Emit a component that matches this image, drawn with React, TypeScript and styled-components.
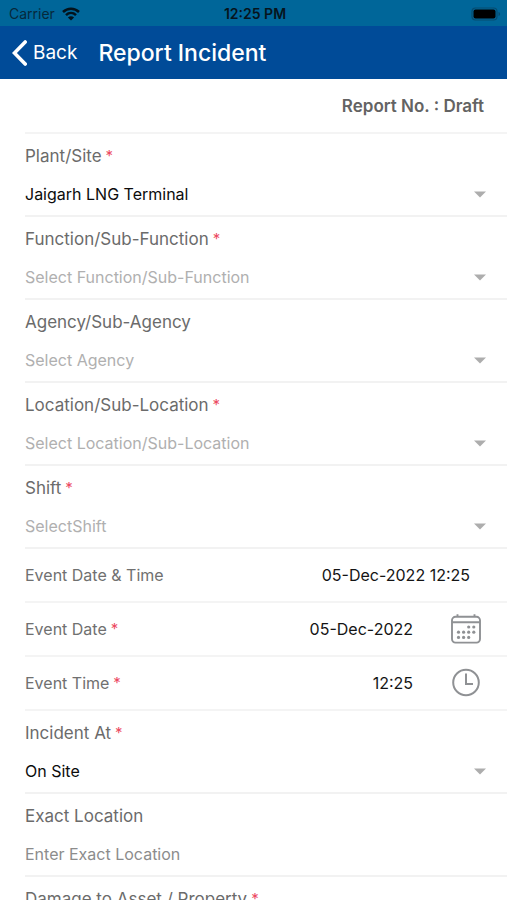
import React, { useState } from "react";
import styled, { createGlobalStyle } from "styled-components";

const GlobalStyle = createGlobalStyle`
  *, *::before, *::after { box-sizing: border-box; }
  body {
    margin: 0;
    background: #fff;
    font-family: Inter, "Liberation Sans", sans-serif;
  }
  button, input, select { font: inherit; color: inherit; }
`;

const Screen = styled.div`
  display: flex;
  flex-direction: column;
  height: 100vh;
  overflow: hidden;
`;

const StatusBar = styled.div`
  flex: none;
  display: grid;
  grid-template-columns: 1fr auto 1fr;
  align-items: center;
  height: 26px;
  padding: 2px 6px 0 9px;
  background: #006699;
  color: #06141d;
  font-size: 14px;
  line-height: 16px;
`;

const Carrier = styled.span`
  display: flex;
  align-items: center;
  gap: 7px;
  color: #06293c;
`;

const Clock = styled.time`
  font-weight: 600;
`;

const Battery = styled.svg`
  justify-self: end;
`;

const NavBar = styled.header`
  flex: none;
  display: flex;
  align-items: center;
  gap: 21px;
  height: 53px;
  padding: 0 12px;
  background: #004b98;
  color: #fff;
`;

const BackButton = styled.button`
  display: flex;
  align-items: center;
  gap: 6px;
  padding: 0;
  border: 0;
  background: none;
  font-size: 19px;
  line-height: 26px;
  cursor: pointer;
`;

const Title = styled.h1`
  margin: 0;
  font-size: 23px;
  font-weight: 500;
  line-height: 28px;
`;

const Form = styled.form`
  flex: 1;
  min-height: 0;
  overflow-y: auto;
  scrollbar-width: none;
  padding-left: 25px;
`;

const ReportNumber = styled.p`
  margin: 0;
  height: 55px;
  padding: 15px 23px 0 0;
  border-bottom: 2px solid #f4f4f4;
  color: #636363;
  font-size: 17px;
  font-weight: 600;
  line-height: 24px;
  text-align: right;
`;

const Field = styled.div`
  display: flex;
  flex-direction: column;
  gap: 14px;
  height: 83px;
  padding-top: 10px;
  border-bottom: 2px solid #f2f2f2;
`;

const FieldLabel = styled.label`
  color: #6b6b6b;
  font-size: 17px;
  line-height: 24px;
`;

const Star = styled.span`
  margin-left: 4px;
  color: #ec4a62;
  font-size: 15px;
  line-height: 16px;
  vertical-align: 1px;
`;

const Picker = styled.div`
  display: grid;
  align-items: center;
  padding-right: 21px;
`;

const Select = styled.select<{ $empty: boolean }>`
  grid-area: 1 / 1;
  width: 100%;
  height: 24px;
  padding: 0 24px 0 0;
  border: 0;
  background: none;
  appearance: none;
  color: ${(p) => (p.$empty ? "#b0b0b0" : "#0c0c0c")};
  font-size: 16px;
  line-height: 24px;
`;

const Caret = styled.svg`
  grid-area: 1 / 1;
  justify-self: end;
  pointer-events: none;
`;

const TextInput = styled.input`
  width: 100%;
  height: 24px;
  padding: 0;
  border: 0;
  background: none;
  color: #0c0c0c;
  font-size: 16px;
  line-height: 24px;
  &::placeholder { color: #8c8c8c; opacity: 1; }
`;

const Row = styled.div`
  display: flex;
  align-items: center;
  height: 54px;
  padding-right: 24px;
  border-bottom: 2px solid #f4f4f4;
`;

const RowLabel = styled.label`
  flex: none;
  color: #707070;
  font-size: 16px;
  line-height: 24px;
`;

const RowInput = styled.input`
  flex: 1;
  min-width: 0;
  margin-right: 36px;
  padding: 0;
  border: 0;
  background: none;
  color: #141414;
  font-size: 16px;
  line-height: 24px;
  text-align: right;
`;

const RowOutput = styled.output`
  flex: 1;
  margin-right: 13px;
  color: #141414;
  font-size: 16px;
  line-height: 24px;
  text-align: right;
`;

const IconButton = styled.button`
  display: flex;
  align-items: center;
  justify-content: center;
  width: 34px;
  height: 34px;
  padding: 0;
  border: 0;
  background: none;
  cursor: pointer;
`;

function Required() {
  return <Star aria-hidden="true">*</Star>;
}

interface PickerFieldProps {
  id: string;
  label: string;
  required?: boolean;
  placeholder?: string;
  options: string[];
}

function PickerField({ id, label, required, placeholder, options }: PickerFieldProps) {
  const [value, setValue] = useState(placeholder ? "" : options[0]);
  return (
    <Field>
      <FieldLabel htmlFor={id}>
        {label}
        {required && <Required />}
      </FieldLabel>
      <Picker>
        <Select
          id={id}
          value={value}
          required={required}
          $empty={value === ""}
          onChange={(e) => setValue(e.target.value)}
        >
          {placeholder && <option value="">{placeholder}</option>}
          {options.map((o) => (
            <option key={o}>{o}</option>
          ))}
        </Select>
        <Caret width="12" height="7" viewBox="0 0 12 7" aria-hidden="true">
          <path d="M0 0.5h12L6 6.5z" fill="#adadad" />
        </Caret>
      </Picker>
    </Field>
  );
}

function WifiIcon() {
  return (
    <svg width="18" height="14" viewBox="0 0 18 14" fill="none" stroke="#03131c" strokeWidth="2.5" aria-hidden="true">
      <path d="M1 5C5.5 0.6 12.5 0.6 17 5" />
      <path d="M4 8.2c2.9-2.8 7.1-2.8 10 0" />
      <path d="M9 13.5L5.9 10.4c1.8-1.6 4.4-1.6 6.2 0z" fill="#03131c" stroke="none" />
    </svg>
  );
}

function BatteryIcon() {
  return (
    <Battery width="30" height="14" viewBox="0 0 30 14" aria-hidden="true">
      <rect x="1" y="1" width="25" height="12" rx="3.5" fill="none" stroke="#064c70" strokeWidth="1.2" />
      <rect x="2.5" y="2.5" width="22" height="9" rx="2" fill="#000" />
      <path d="M27.5 5v4c1-.3 1.6-1.1 1.6-2s-.6-1.7-1.6-2z" fill="#064c70" />
    </Battery>
  );
}

const DOTS: [number, number][] = [
  [17.7, 13], [22.8, 13],
  [7.5, 18.2], [12.6, 18.2], [17.7, 18.2], [22.8, 18.2],
  [7.5, 23.4], [12.6, 23.4], [17.7, 23.4],
];

function CalendarIcon() {
  return (
    <svg width="30" height="30" viewBox="0 0 30 30" fill="none" stroke="#8f9194" strokeWidth="1.9" aria-hidden="true">
      <rect x="1" y="2.8" width="28" height="25.8" rx="3.5" />
      <path d="M1 8.3h28M6.5 0.2v2.6M23.5 0.2v2.6" />
      {DOTS.map(([x, y]) => (
        <circle key={`${x}-${y}`} cx={x} cy={y} r="1.6" fill="#8f9194" stroke="none" />
      ))}
    </svg>
  );
}

function ClockIcon() {
  return (
    <svg width="30" height="30" viewBox="0 0 30 30" fill="none" stroke="#8f9194" strokeWidth="2" aria-hidden="true">
      <circle cx="15" cy="14.5" r="12.8" />
      <path d="M15 5.5v10.5h7" />
    </svg>
  );
}

export default function App() {
  const [date, setDate] = useState("05-Dec-2022");
  const [time, setTime] = useState("12:25");

  return (
    <Screen>
      <GlobalStyle />
      <StatusBar>
        <Carrier>
          Carrier
          <WifiIcon />
        </Carrier>
        <Clock>12:25 PM</Clock>
        <BatteryIcon />
      </StatusBar>
      <NavBar>
        <BackButton type="button">
          <svg width="15" height="26" viewBox="0 0 15 26" fill="none" stroke="#fff" strokeWidth="3.6" strokeLinecap="round" aria-hidden="true">
            <path d="M13.2 2L2.4 13l10.8 11" />
          </svg>
          Back
        </BackButton>
        <Title>Report Incident</Title>
      </NavBar>
      <Form>
        <ReportNumber>Report No. : Draft</ReportNumber>
        <PickerField id="plant" label="Plant/Site" required options={["Jaigarh LNG Terminal"]} />
        <PickerField id="function" label="Function/Sub-Function" required placeholder="Select Function/Sub-Function" options={[]} />
        <PickerField id="agency" label="Agency/Sub-Agency" placeholder="Select Agency" options={[]} />
        <PickerField id="location" label="Location/Sub-Location" required placeholder="Select Location/Sub-Location" options={[]} />
        <PickerField id="shift" label="Shift" required placeholder="SelectShift" options={[]} />
        <Row>
          <RowLabel htmlFor="event">Event Date &amp; Time</RowLabel>
          <RowOutput id="event">{`${date} ${time}`}</RowOutput>
        </Row>
        <Row>
          <RowLabel htmlFor="date">
            Event Date
            <Required />
          </RowLabel>
          <RowInput id="date" value={date} onChange={(e) => setDate(e.target.value)} />
          <IconButton type="button" aria-label="Choose date">
            <CalendarIcon />
          </IconButton>
        </Row>
        <Row>
          <RowLabel htmlFor="time">
            Event Time
            <Required />
          </RowLabel>
          <RowInput id="time" value={time} onChange={(e) => setTime(e.target.value)} />
          <IconButton type="button" aria-label="Choose time">
            <ClockIcon />
          </IconButton>
        </Row>
        <PickerField id="incident-at" label="Incident At" required options={["On Site"]} />
        <Field>
          <FieldLabel htmlFor="exact">Exact Location</FieldLabel>
          <TextInput id="exact" placeholder="Enter Exact Location" />
        </Field>
        <PickerField id="damage" label="Damage to Asset / Property" required placeholder="Select" options={["Yes", "No"]} />
      </Form>
    </Screen>
  );
}
